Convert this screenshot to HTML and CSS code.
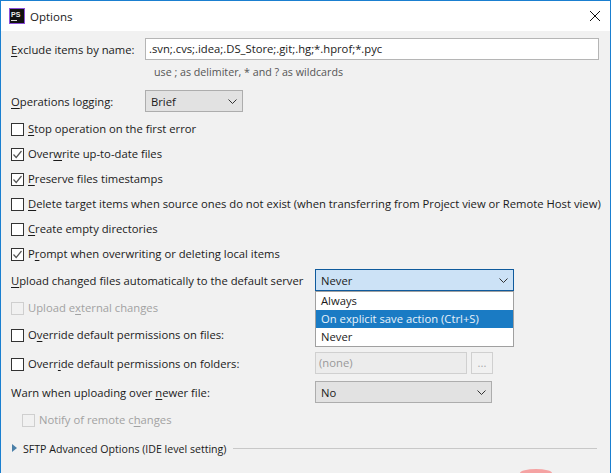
FILE: index.html
```html
<!DOCTYPE html>
<html lang="en">
<head>
    <meta charset="UTF-8">
    <meta name="viewport" content="width=device-width, initial-scale=1.0">
    <title>Options</title>
    <link rel="stylesheet" href="styles.css">
</head>
<body>
<div class="window">

    <!-- Title bar -->
    <div class="titlebar">
        <svg class="app-icon" width="16" height="16" viewBox="0 0 16 16">
            <rect x="0.5" y="0.5" width="15" height="15" fill="#111" stroke="#8a4fd8"/>
            <text x="2" y="8.5" class="app-icon-text">PS</text>
            <rect x="2" y="12" width="6" height="1" fill="#ddd"/>
        </svg>
        <span class="title">Options</span>
        <svg class="close" width="10" height="10" viewBox="0 0 10 10">
            <path d="M0 0L10 10M10 0L0 10" stroke="#111" fill="none"/>
        </svg>
    </div>

    <div class="content">
        <div class="field-row exclude-row">
            <label class="field-label"><u>E</u>xclude items by name:</label>
            <div class="text-input">.svn;.cvs;.idea;.DS_Store;.git;.hg;*.hprof;*.pyc</div>
        </div>
        <div class="hint">use ; as delimiter, * and ? as wildcards</div>

        <div class="field-row logging-row">
            <label class="field-label"><u>O</u>perations logging:</label>
            <div class="combo combo-brief">Brief<svg class="chevron" width="9" height="5" viewBox="0 0 9 5"><path d="M0.5 0.5L4.5 4.5L8.5 0.5" stroke="#333" fill="none"/></svg></div>
        </div>

        <!-- Checkboxes -->
        <div class="check-list">
            <div class="check-row"><span class="box"></span><span class="check-text"><u>S</u>top operation on the first error</span></div>
            <div class="check-row"><span class="box"><svg width="11" height="11" viewBox="0 0 11 11"><path d="M1.5 5.5L4.2 8.5L9.5 2" stroke="#555" stroke-width="1.2" fill="none"/></svg></span><span class="check-text">Over<u>w</u>rite up-to-date files</span></div>
            <div class="check-row"><span class="box"><svg width="11" height="11" viewBox="0 0 11 11"><path d="M1.5 5.5L4.2 8.5L9.5 2" stroke="#555" stroke-width="1.2" fill="none"/></svg></span><span class="check-text"><u>P</u>reserve files timestamps</span></div>
            <div class="check-row"><span class="box"></span><span class="check-text"><u>D</u>elete target items when source ones do not exist (when transferring from Project view or Remote Host view)</span></div>
            <div class="check-row"><span class="box"></span><span class="check-text"><u>C</u>reate empty directories</span></div>
            <div class="check-row"><span class="box"><svg width="11" height="11" viewBox="0 0 11 11"><path d="M1.5 5.5L4.2 8.5L9.5 2" stroke="#555" stroke-width="1.2" fill="none"/></svg></span><span class="check-text">P<u>r</u>ompt when overwriting or deleting local items</span></div>
        </div>

        <div class="grid-rows">
            <div class="row-label"><u>U</u>pload changed files automatically to the default server</div>
            <div class="combo combo-open">Never<svg class="chevron" width="9" height="5" viewBox="0 0 9 5"><path d="M0.5 0.5L4.5 4.5L8.5 0.5" stroke="#333" fill="none"/></svg>
                <!-- Open dropdown -->
                <div class="popup">
                    <div class="popup-item">Always</div>
                    <div class="popup-item selected">On explicit save action (Ctrl+S)</div>
                    <div class="popup-item">Never</div>
                </div>
            </div>

            <div class="check-row disabled"><span class="box"></span><span class="check-text">Upload e<u>x</u>ternal changes</span></div>
            <div></div>

            <div class="check-row"><span class="box"></span><span class="check-text">O<u>v</u>erride default permissions on files:</span></div>
            <div></div>

            <div class="check-row folders-row"><span class="box"></span><span class="check-text">Overr<u>i</u>de default permissions on folders:</span></div>
            <div class="none-group">
                <div class="none-input">(none)</div>
                <div class="dots">...</div>
            </div>

            <div class="row-label">Warn when uploading over <u>n</u>ewer file:</div>
            <div class="combo combo-no">No<svg class="chevron" width="9" height="5" viewBox="0 0 9 5"><path d="M0.5 0.5L4.5 4.5L8.5 0.5" stroke="#333" fill="none"/></svg></div>
        </div>

        <div class="check-row disabled notify-row"><span class="box"></span><span class="check-text">Notify of remote c<u>h</u>anges</span></div>

        <div class="sftp-row">
            <svg class="arrow" width="5" height="8" viewBox="0 0 5 8"><path d="M0 0L5 4L0 8Z" fill="#4a7fa8"/></svg>
            <span class="sftp-text">SFTP Advanced Options (IDE level setting)</span>
            <div class="sftp-line"></div>
        </div>
    </div>
</div>
<div class="blob"></div>
</body>
</html>
```
FILE: styles.css
```css
/* General */
body {
    margin: 0;
    height: 473px;
    background-color: #fff;
    font-family: "Open Sans", Arial, sans-serif;
    font-size: 11.25px;
    color: #1a1a1a;
    overflow: hidden;
    position: relative;
}
u {
    text-underline-offset: 2px;
}

/* Window */
.window {
    width: 611px;
    height: 473px;
    box-sizing: border-box;
    border: 1px solid #1a7fd0;
    border-bottom: 0;
    background-color: #f1f1f1;
    overflow: hidden;
}

/* Title bar */
.titlebar {
    height: 30px;
    display: flex;
    align-items: center;
    background-color: #fff;
    padding: 0 10px 0 8px;
}
.app-icon {
    flex: none;
}
.app-icon-text {
    font-family: "Liberation Sans", Arial, sans-serif;
    font-size: 7px;
    font-weight: bold;
    fill: #eee;
}
.title {
    margin-left: 5px;
    flex: 1;
    font-size: 11.5px;
}
.close {
    flex: none;
}

/* Content */
.content {
    padding: 7px 11px 0 10px;
}
.field-row {
    display: flex;
    align-items: center;
}
.field-label {
    flex: none;
    width: 134px;
}
.text-input {
    flex: none;
    width: 454px;
    height: 22px;
    line-height: 20px;
    box-sizing: border-box;
    border: 1px solid #b5b5b5;
    background-color: #fff;
    padding-left: 3px;
}
.hint {
    margin: 3px 0 0 143px;
    height: 18px;
    line-height: 18px;
    font-size: 10.7px;
    color: #555;
}
.logging-row {
    margin-top: 9px;
}

/* Combo boxes */
.combo {
    position: relative;
    display: flex;
    align-items: center;
    justify-content: space-between;
    box-sizing: border-box;
    height: 22px;
    border: 1px solid #adadad;
    background-color: #e2e2e2;
    padding: 0 5px;
}
.combo-brief {
    width: 98px;
}
.combo-open {
    width: 199px;
    border: 1px solid #0f5a9c;
    background-color: #cce2f6;
}
.combo-no {
    width: 177px;
}

/* Popup */
.popup {
    position: absolute;
    left: -1px;
    top: 21px;
    width: 199px;
    box-sizing: border-box;
    border: 1px solid #a0a0a0;
    background-color: #fff;
}
.popup-item {
    height: 18px;
    line-height: 18px;
    padding-left: 5px;
}
.popup-item.selected {
    background-color: #1a7bc4;
    color: #e8f2fa;
}

/* Checkboxes */
.check-list {
    margin-top: 8px;
    display: flex;
    flex-direction: column;
    gap: 7px;
}
.check-row {
    display: flex;
    align-items: center;
    height: 18px;
    gap: 4px;
    white-space: nowrap;
}
.check-text {
    margin-bottom: 2px;
}
.box {
    flex: none;
    width: 13px;
    height: 13px;
    box-sizing: border-box;
    border: 1px solid #333;
    background-color: #fff;
    display: flex;
    align-items: center;
    justify-content: center;
}
.disabled {
    color: #a2a2a2;
}
.disabled .box {
    border-color: #cfcfcf;
    background-color: #f1f1f1;
}

/* Rows with the right column */
.grid-rows {
    margin-top: 6px;
    display: grid;
    grid-template-columns: 304px 1fr;
    grid-template-rows: 30px 27px 26px 29px 22px;
    justify-items: start;
    align-items: start;
}
.row-label {
    height: 22px;
    line-height: 24px;
    white-space: nowrap;
}
.folders-row {
    margin-top: 3px;
}
.none-group {
    display: flex;
    gap: 4px;
}
.none-input {
    width: 152px;
    height: 22px;
    line-height: 20px;
    box-sizing: border-box;
    border: 1px solid #d0d0d0;
    background-color: #ececec;
    color: #999;
    padding-left: 3px;
}
.dots {
    width: 22px;
    height: 22px;
    line-height: 20px;
    box-sizing: border-box;
    border: 1px solid #d0d0d0;
    text-align: center;
    color: #aaa;
}
.notify-row {
    margin: 8px 0 0 11px;
}

/* SFTP section */
.sftp-row {
    margin: 10px 2px 0 0;
    display: flex;
    align-items: center;
    gap: 6px;
    height: 18px;
    white-space: nowrap;
    padding-left: 1px;
}
.sftp-text {
    font-size: 10.6px;
    margin-top: 1px;
}
.sftp-line {
    flex: 1;
    height: 1px;
    background-color: #c8c8c8;
}

/* Red mark at the bottom */
.blob {
    position: absolute;
    left: 520px;
    top: 469px;
    width: 32px;
    height: 4px;
    border-radius: 50% 50% 0 0 / 100% 100% 0 0;
    background-color: #f5a3a3;
}
```
